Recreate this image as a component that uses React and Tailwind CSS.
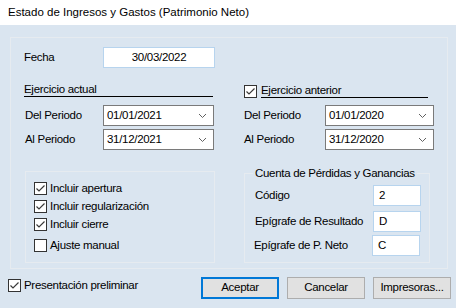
import React from "react";

const font = { fontFamily: '"Liberation Sans", Arial, sans-serif', letterSpacing: "-0.3px" };
const titleFont = { fontFamily: '"Liberation Sans", Arial, sans-serif', letterSpacing: "0" };

function Check({ checked }) {
  return (
    <div className="w-[13px] h-[13px] border border-[#333333] bg-white flex items-center justify-center shrink-0">
      {checked && (
        <svg width="11" height="11" viewBox="0 0 11 11">
          <path d="M1.5 5.5 L4 8 L9.5 2.5" fill="none" stroke="#3a3a3a" strokeWidth="1.2" />
        </svg>
      )}
    </div>
  );
}

function Combo({ value, w }) {
  return (
    <div className={`h-[21px] ${w} border border-[#7a7a7a] bg-white flex items-center justify-between pl-[3px] pr-[6px]`}>
      <span>{value}</span>
      <svg width="9" height="6" viewBox="0 0 9 6">
        <path d="M1 1 L4.5 4.5 L8 1" fill="none" stroke="#606060" strokeWidth="1" />
      </svg>
    </div>
  );
}

function TextBox({ value, w, center }) {
  return (
    <div className={`h-[21px] ${w} border border-[#b7d4ee] bg-white flex items-center ${center ? "justify-center" : "pl-[5px]"}`}>
      {value}
    </div>
  );
}

function Btn({ children, primary }) {
  return (
    <div
      className={`w-[78px] h-[22px] flex items-center justify-center bg-[#e1e1e1] ${
        primary ? "border-2 border-[#0078d7]" : "border border-[#adadad]"
      }`}
    >
      {children}
    </div>
  );
}

export default function App() {
  return (
    <div className="w-[456px] h-[308px] bg-[#dae5f0] text-[11.5px] text-black overflow-hidden whitespace-nowrap" style={font}>
      <div className="h-[25px] bg-white flex items-center pl-[8px] text-[11.5px]" style={titleFont}>
        Estado de Ingresos y Gastos (Patrimonio Neto)
      </div>
      <div className="pl-[10px] pt-[12px]">
        <div className="w-[438px] h-[232px] border border-[#e6ebf0] pt-[9px] pl-[13px]">
          <div className="flex items-center h-[21px]">
            <span className="w-[79px]">Fecha</span>
            <TextBox value="30/03/2022" w="w-[112px]" center />
          </div>
          <div className="flex mt-[17px]">
            <div className="w-[189px] h-[12px] border-b border-black flex items-end">
              <span className="leading-[13px]">Ejercicio actual</span>
            </div>
            <div className="ml-[31px] flex items-end">
              <Check checked />
              <div className="ml-[4px] w-[167px] h-[12px] border-b border-black flex items-end">
                <span className="leading-[13px]">Ejercicio anterior</span>
              </div>
            </div>
          </div>
          <div className="flex mt-[7px]">
            <div className="w-[220px]">
              <div className="flex items-center">
                <span className="w-[79px] pl-[1px]">Del Periodo</span>
                <Combo value="01/01/2021" w="w-[111px]" />
              </div>
              <div className="flex items-center mt-[3px]">
                <span className="w-[79px] pl-[1px]">Al Periodo</span>
                <Combo value="31/12/2021" w="w-[111px]" />
              </div>
            </div>
            <div>
              <div className="flex items-center">
                <span className="w-[81px]">Del Periodo</span>
                <Combo value="01/01/2020" w="w-[109px]" />
              </div>
              <div className="flex items-center mt-[3px]">
                <span className="w-[81px]">Al Periodo</span>
                <Combo value="31/12/2020" w="w-[109px]" />
              </div>
            </div>
          </div>
          <div className="flex mt-[21px]">
            <div className="ml-[1px] w-[190px] h-[92px] border border-[#e6ebf0] pl-[8px] pt-[10px] flex flex-col gap-[5px]">
              <div className="flex items-center gap-[3px] h-[13px] leading-[13px]"><Check checked /><span>Incluir apertura</span></div>
              <div className="flex items-center gap-[3px] h-[13px] leading-[13px]"><Check checked /><span>Incluir regularización</span></div>
              <div className="flex items-center gap-[3px] h-[13px] leading-[13px]"><Check checked /><span>Incluir cierre</span></div>
              <div className="flex items-center gap-[3px] h-[13px] leading-[13px] mt-[3px]"><Check /><span>Ajuste manual</span></div>
            </div>
            <div className="ml-[29px] mt-[2px] w-[186px] h-[90px] border border-[#e6ebf0] relative pl-[10px] pt-[11px]">
              <span className="absolute left-[8px] top-[-8px] bg-[#dae5f0] px-[2px] leading-[14px]">Cuenta de Pérdidas y Ganancias</span>
              <div className="flex items-center">
                <span className="w-[118px]">Código</span>
                <TextBox value="2" w="w-[48px]" />
              </div>
              <div className="flex items-center mt-[5px]">
                <span className="w-[118px]">Epígrafe de Resultado</span>
                <TextBox value="D" w="w-[48px]" />
              </div>
              <div className="flex items-center mt-[3px]">
                <span className="w-[118px] -ml-[1px]">Epígrafe de P. Neto</span>
                <TextBox value="C" w="w-[48px]" />
              </div>
            </div>
          </div>
        </div>
        <div className="flex items-start mt-[8px]">
          <div className="flex items-center gap-[3px] -ml-[2px] w-[193px]">
            <Check checked />
            <span>Presentación preliminar</span>
          </div>
          <div className="flex gap-[8px]">
            <Btn primary>Aceptar</Btn>
            <Btn>Cancelar</Btn>
            <Btn>Impresoras...</Btn>
          </div>
        </div>
      </div>
    </div>
  );
}
